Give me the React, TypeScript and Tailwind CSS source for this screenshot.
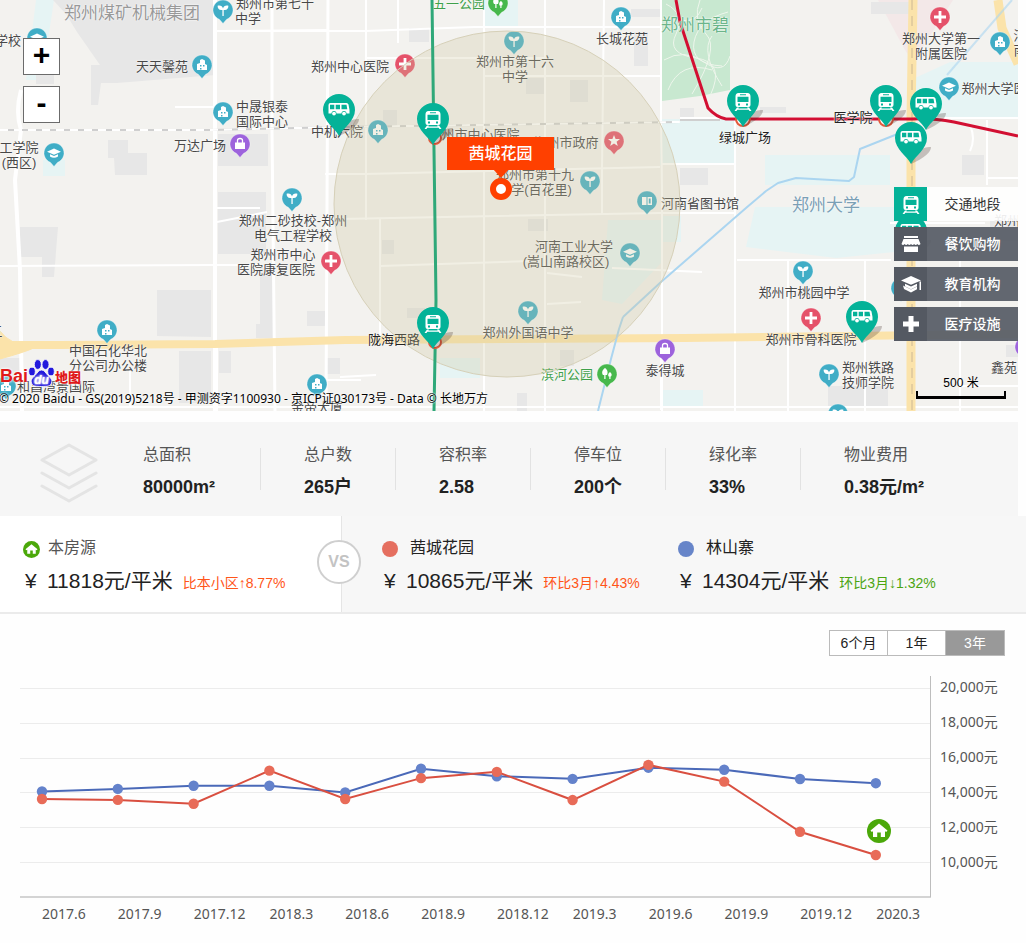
import React, { useState } from "react";

type Kind = "sprout" | "building" | "cap" | "book" | "cross" | "star" | "bag" | "tree";

const PIN_COLORS: Record<Kind, string> = {
  sprout: "#40adc6",
  building: "#40adc6",
  cap: "#40adc6",
  book: "#40adc6",
  cross: "#e5526a",
  star: "#e5526a",
  bag: "#9d63dc",
  tree: "#47b84c",
};

const PINS: [Kind, number, number][] = [
  ["sprout", 223, 10],
  ["sprout", 514, 41],
  ["sprout", 292, 198],
  ["sprout", 590, 181],
  ["sprout", 528, 311],
  ["sprout", 803, 271],
  ["sprout", 829, 374],
  ["sprout", 838, 414],
  ["building", 202, 65],
  ["building", 223, 112],
  ["building", 378, 130],
  ["building", 107, 330],
  ["building", 317, 384],
  ["building", 621, 17],
  ["building", 1000, 42],
  ["building", 6, 386],
  ["building", 901, 288],
  ["cap", 37, 38],
  ["cap", 54, 153],
  ["cap", 630, 253],
  ["cap", 949, 87],
  ["book", 647, 201],
  ["cross", 405, 64],
  ["cross", 331, 261],
  ["cross", 940, 17],
  ["cross", 811, 318],
  ["star", 614, 141],
  ["bag", 240, 144],
  ["bag", 665, 349],
  ["bag", 1025, 347],
  ["tree", 498, 3],
  ["tree", 607, 374],
];

type Label = { x: number; y: number; lines: string[]; tone?: "park" | "area" | "campus" | "greenArea" | "station" };

// x is the middle of the label, y the middle of its first line.
const LABELS: Label[] = [
  { x: 132, y: 14, lines: ["郑州煤矿机械集团"], tone: "area" },
  { x: 275, y: 4, lines: ["郑州市第七十"] },
  { x: 248, y: 19, lines: ["中学"] },
  { x: 8, y: 41, lines: ["学校"] },
  { x: 162, y: 67, lines: ["天天馨苑"] },
  { x: 350, y: 67, lines: ["郑州中心医院"] },
  { x: 262, y: 107, lines: ["中晟银泰", "国际中心"] },
  { x: 200, y: 146, lines: ["万达广场"] },
  { x: 337, y: 132, lines: ["中机六院"] },
  { x: 19, y: 148, lines: ["工学院", "(西区)"] },
  { x: 293, y: 221, lines: ["郑州二砂技校-郑州", "电气工程学校"] },
  { x: 283, y: 255, lines: ["郑州市中心"] },
  { x: 276, y: 270, lines: ["医院康复医院"] },
  { x: 108, y: 351, lines: ["中国石化华北", "分公司办公楼"] },
  { x: 56, y: 387, lines: ["和昌湾景国际"] },
  { x: 317, y: 408, lines: ["金帝大厦"] },
  { x: -4, y: 332, lines: ["五"] },
  { x: 700, y: 204, lines: ["河南省图书馆"] },
  { x: 515, y: 62, lines: ["郑州市第十六", "中学"] },
  { x: 622, y: 39, lines: ["长城花苑"] },
  { x: 459, y: 4, lines: ["五一公园"], tone: "park" },
  { x: 695, y: 26, lines: ["郑州市碧"], tone: "greenArea" },
  { x: 535, y: 175, lines: ["郑州市第十九", "中学(百花里)"] },
  { x: 566, y: 143, lines: ["郑州市政府"] },
  { x: 474, y: 135, lines: ["郑州市中心医院"] },
  { x: 574, y: 247, lines: ["河南工业大学"] },
  { x: 566, y: 262, lines: ["(嵩山南路校区)"] },
  { x: 528, y: 333, lines: ["郑州外国语中学"] },
  { x: 567, y: 375, lines: ["滨河公园"], tone: "park" },
  { x: 665, y: 371, lines: ["泰得城"] },
  { x: 394, y: 340, lines: ["陇海西路"], tone: "station" },
  { x: 745, y: 138, lines: ["绿城广场"], tone: "station" },
  { x: 853, y: 118, lines: ["医学院"], tone: "station" },
  { x: 941, y: 39, lines: ["郑州大学第一", "附属医院"] },
  { x: 1020, y: 36, lines: ["河", "南"] },
  { x: 994, y: 89, lines: ["郑州大学医"] },
  { x: 826, y: 206, lines: ["郑州大学"], tone: "campus" },
  { x: 1007, y: 221, lines: ["郑州"] },
  { x: 804, y: 293, lines: ["郑州市桃园中学"] },
  { x: 811, y: 340, lines: ["郑州市骨科医院"] },
  { x: 868, y: 368, lines: ["郑州铁路", "技师学院"] },
  { x: 1004, y: 368, lines: ["鑫苑"] },
];

const TONES = {
  plain: "text-[13px] text-[#484848]",
  park: "text-[13px] text-[#3fa04a]",
  area: "text-[17px] text-[#999999]",
  greenArea: "text-[17px] text-[#6bb58a]",
  campus: "text-[17px] text-[#7b9fb5]",
  station: "text-[13px] text-[#222222]",
};

const TRANSIT: ["train" | "bus", number, number][] = [
  ["bus", 339, 110],
  ["train", 433, 119],
  ["train", 433, 323],
  ["train", 743, 101],
  ["train", 886, 101],
  ["bus", 926, 104],
  ["bus", 911, 231],
  ["bus", 911, 138],
  ["bus", 862, 317],
];

function PinGlyph({ kind }: { kind: Kind }) {
  switch (kind) {
    case "sprout":
      return <path d="M-.6 6V0C-4 .6-5.4-1.6-5.4-4.2-2.600-5-.5-3.700 0-1.400.5-3.700 2.600-5 5.400-4.200 5.400-1.600 4 .6.7 0v6z" fill="#fff" />;
    case "building":
      return <path d="M-5 5v-6l3-1v-3l2-1 3 1.500V-1l2 1v5zM-2 0v1.500h1.500V0zm3 0v1.500h1.500V0zM-2 3v1.500h1.500V3z" fill="#fff" fillRule="evenodd" />;
    case "cap":
      return <path d="M0-4.500 7-1.300 0 1.800-7-1.300zM-4 1.200 0 3 4 1.200v2.300Q0 6.200-4 3.500z" fill="#fff" />;
    case "book":
      return <path d="M-5-4h4.500v8H-5zM.5-4H5v8H.5zM1.800-2.500v5h1.800v-5z" fill="#fff" fillRule="evenodd" />;
    case "cross":
      return <path d="M-1.400-6h2.800v4.600H6v2.800H1.400V6h-2.800V1.400H-6v-2.800h4.600z" fill="#fff" />;
    case "star":
      return <path d="M0-6 1.600-2 6-1.900 2.600.8 3.800 5 0 2.600-3.800 5-2.600.8-6-1.900-1.600-2z" fill="#fff" />;
    case "bag":
      return (
        <g>
          <path d="M-5-1.500H5V5H-5z" fill="#fff" />
          <path d="M-2.500-1v-2.500a2.500 2 0 0 1 5 0V-1" fill="none" stroke="#fff" strokeWidth="1.300" />
        </g>
      );
    case "tree":
      return <path d="M-2-6C1-4 1-1 0 1h-1.500v4h-1.200V1H-4C-5.500-1-5-4-2-6zM3-2c2 1.500 2 3 1 4.500H3.500V5H2.300V2.500H1.500C.8 1 1.300-1 3-2z" fill="#fff" />;
  }
}

function TrainGlyph() {
  return (
    <path
      fill="#fff"
      fillRule="evenodd"
      d="M-4.500-8h9Q7.500-8 7.500-4.500V4Q7.500 6 5.500 6h-11Q-7.500 6-7.500 4v-8.500Q-7.500-8-4.500-8zM-3-6.700v1h6v-1zM-5.500-4.300V1h11v-5.300zM-5 2.600v1.800h2V2.600zm8 0v1.800h2V2.600zM-6 6.600h2L-4.600 7.500h9.200L4 6.600h2L8.500 10h-2l-.9-1.200h-11.200L-6.500 10h-2z"
    />
  );
}

function BusGlyph() {
  return (
    <g>
      <path
        fill="#fff"
        fillRule="evenodd"
        d="M-8.500-6h16Q9-6 9.500-4.500L10.500 1v3.500h-3a2.500 2.500 0 0 0-5 0h-5a2.500 2.500 0 0 0-5 0h-3v-8.500Q-10.500-6-8.500-6zM-9-4.300V.2h4.300v-4.500zm5.700 0V.2H1v-4.500zm5.800 0V.2h5.800L7.500-4.300z"
      />
      <circle cx="-5" cy="4.600" r="1.900" fill="#fff" />
      <circle cx="5" cy="4.600" r="1.900" fill="#fff" />
    </g>
  );
}

function MapBase() {
  return (
    <svg className="absolute left-0 top-0" width="1018" height="411" viewBox="0 0 1018 411" aria-hidden="true">
      <rect width="1018" height="411" fill="#f3f2ef" />
      <g fill="#e6f4f4">
        <path d="M36 0h18l-12 80H26zM43 160h22v16H43zM484 0h34v27h-34zM680 119h55v46h-75v-46zM661 216h20v26h-20zM765 155h125v30H765zM755 207h163l-14 44-68 7-90-11zM950 62h68v57H915V78zM661 390h42v18h-42z" />
        <path d="M608 220h54v42l-40 42-20-4zM440 358h40v20h-40z" />
      </g>
      <path d="M662 0h68v90l-30 6-38 5z" fill="#c8e8d0" />
      <g stroke="#eef6ec" fill="none" strokeWidth="1">
        <path d="M666 4q20 10 10 30t20 24 14 38M728 12q-30 8-34 30t28 24M664 60q20-12 40 2t26-6M700 0q-8 20 6 34t-14 60M668 90q12-30 44-20M680 20q16 4 22-12M712 36q-12 16 10 50" />
      </g>
      <path d="M878 0h75l-40 62-8-12z" fill="#f3e8e8" />
      <g fill="#e7e7e7">
        <path d="M53 0h86l76 0v75l-98 8-16 0-3 22H91V65h9L77 32 66 14zM36 64h18v20H36zM108 140h20v13h19v22h-32l-1-17h-6zM218 134h50v32h-50zM218 192h48v62h-48zM20 227h38l-4 50H42v-20H20zM157 290h54v47l-54-1zM179 351h32v52h-32zM260 268h14v70h-18v-14h4zM307 311h18v15h-18zM219 351h12v22h-12zM0 358h20v22H0zM409 28h20v14h-20zM634 32h14v34h-14zM631 9h30v8h-30zM327 358h13v16h-13z" />
        <path d="M871 2h38v12h-38zM680 108h14v12h-14zM680 168h28v17h-28zM760 107h26v6h-26zM962 155h22v20h-22zM990 215h28v26h-28zM828 386h60v20h-60zM1006 345h12v12h-12zM517 393h10v18h-10zM526 78h20v16h-20zM570 80h18v22h-18zM383 110h14v15h-14zM382 240h12v14h-12zM407 308h18v10h-18zM528 219h20v12h-20zM560 350h14v16h-14z" />
      </g>
      <g stroke="#ffffff" fill="none" strokeWidth="4">
        <path d="M215 0v411M21 90q-6 22 0 40l-6 50 5 90 2 141" strokeWidth="4" />
        <path d="M272 0v130l3 281M328 0l-2 411" strokeWidth="3" />
      </g>
      <g stroke="#ffffff" fill="none" strokeWidth="2">
        <path d="M366 0v220M380 218v125M398 0v43M484 0v411M545 0v411M604 0l-2 170v45M661 0v119l1 70v222M735 119v292M788 260v151M865 260v151M960 260v151M987 120v65M130 370v38M970 125q6 14 0 26" />
        <path d="M215 31h150l110-4 186 0M215 31l114-1M366 58h180M484 76h176M0 266l215-1h45M175 107h40M217 222l50-10M325 174h40l295-7M340 219l320-6h75M380 266l150-5M612 268l90 4M547 273l35 4M547 304l34-2M340 377l36-2M484 338h-60M735 164h-74M737 260h154M987 178h31M217 347v64M680 118h338M327 380h34M215 208h45M960 386h58M890 223h95M661 340v70" />
        <path d="M0 407h1018" />
      </g>
      <path d="M0 130h210l130-3 340-5M680 120h40" stroke="#cfcfcf" strokeWidth="2" fill="none" />
      <path d="M0 130h210l130-3 340-5" stroke="#ffffff" strokeDasharray="8 6" strokeWidth="2" fill="none" />
      <g stroke="#fbe3aa" fill="none">
        <path d="M0 345h60l155-1 130-4 340-2 333-4" strokeWidth="8" />
        <path d="M0 331q10 14 30 14t-30 14z" fill="#fbe3aa" strokeWidth="1" />
        <path d="M913 0l-2 119v292" strokeWidth="9" />
        <path d="M998 0l4 28 16 36" strokeWidth="9" />
      </g>
      <path d="M912 0v411" stroke="#cdb894" strokeWidth="1" strokeDasharray="10 6" fill="none" />
      <g stroke="#abd5f0" fill="none" strokeWidth="2" strokeLinejoin="round">
        <path d="M598 411l13-52 8-30 4-12M623 317l38-35 85-74 20-17 12-8 18-5 53 3 5-4 6-28 50-20" />
        <path d="M1012 0l-65 75" opacity=".6" />
      </g>
      <path d="M676 0l4 22 28 86q8 9 18 11h186q20-1 42 3l64 14" stroke="#d20f32" strokeWidth="3" fill="none" />
    </svg>
  );
}

function MapOverlay() {
  return (
    <svg className="absolute left-0 top-0" width="1018" height="411" viewBox="0 0 1018 411" aria-hidden="true">
      <circle cx="507" cy="204" r="173" fill="#ccc49d" fillOpacity=".28" stroke="#d6d0b8" strokeWidth="1" />
      <path d="M432 0l4 300-2 111" stroke="#2fa879" strokeWidth="3" fill="none" />
      <g fill="#fff" stroke="#e35a3c" strokeWidth="2">
        <circle cx="743" cy="119" r="7" />
        <circle cx="886" cy="119" r="7" />
        <circle cx="435" cy="138" r="6" />
        <circle cx="435" cy="342" r="6" />
      </g>
      {TRANSIT.map(([kind, x, y]) => (
        <g key={`${x}-${y}`} transform={`translate(${x} ${y})`}>
          <path d="M0 26Q20 17 20 9 12 8 4 16z" fill="#3c2c24" opacity=".26" />
          <path d="M0 26C-4 18-16 11-16 0a16 16 0 0 1 32 0C16 11 4 18 0 26z" fill="#04b298" />
          {kind === "train" ? (
            <TrainGlyph />
          ) : (
            <g transform="translate(0 -1)">
              <BusGlyph />
            </g>
          )}
        </g>
      ))}
      <path d="M493 169h16l-8 9z" fill="#ff4000" />
      <circle cx="501" cy="189" r="8" fill="#fff" stroke="#ff4000" strokeWidth="6" />
    </svg>
  );
}

function BaiduLogo() {
  return (
    <div className="absolute left-0 top-[355px] flex h-8 items-end font-['Liberation_Sans',sans-serif] font-bold text-[#e01a1a] [text-shadow:0_0_2px_#fff,0_0_3px_#fff]">
      <span className="text-[18px] leading-[22px]">Bai</span>
      <svg width="27" height="28" viewBox="0 0 27 28" role="img" aria-label="Baidu">
        <g fill="#2319dc" stroke="#fff" strokeWidth=".8">
          <path d="M13.500 11c3 0 4 3 6.500 5.500s4.500 4 3.500 7.500-5 3.500-10 3.500-9 0-10-3.500 1-5 3.500-7.500 3.500-5.500 6.500-5.500z" />
          <ellipse cx="4" cy="12.500" rx="3.300" ry="4.300" />
          <ellipse cx="9.800" cy="5.500" rx="3.500" ry="4.900" />
          <ellipse cx="17.500" cy="5.500" rx="3.500" ry="4.900" />
          <ellipse cx="23" cy="12.500" rx="3.300" ry="4.300" />
        </g>
        <text x="13.500" y="25" textAnchor="middle" fontSize="12" fill="#fff" fontWeight="bold" fontStyle="italic">
          du
        </text>
      </svg>
      <span className="font-['Noto_Sans_CJK_SC',sans-serif] text-[13px] font-black leading-[20px]">地图</span>
    </div>
  );
}

const CATEGORIES = [
  { name: "交通地段", icon: <TrainGlyph /> },
  {
    name: "餐饮购物",
    icon: <path fill="#fff" d="M-7-8H7v2H-7zM-7.500-5h15L9.500 0q-1.600 2-3.200 0-1.600 2-3.200 0Q1.600 2 0 0q-1.600 2-3.200 0-1.600 2-3.200 0-1.600 2-3.100 0zM-7 2.500H7V8H-7z" />,
  },
  {
    name: "教育机构",
    icon: <path fill="#fff" d="M0-8 10-3.500 0 .8-10-3.500zM-6-.2 0 2.600 6-.2v2.400L0 5.200-6 2.200zM-8 1.500l8 4 6-3v2.800L0 8.500l-7-3.600zM8.500-2.500h1.500V6H8.500z" />,
  },
  { name: "医疗设施", icon: <path fill="#fff" d="M-2.500-8h5v5.500H8v5H2.500V8h-5V2.500H-8v-5h5.500z" /> },
];

function MapSection() {
  const [category, setCategory] = useState("交通地段");
  return (
    <section aria-label="地图" className="relative mr-2 h-[411px] overflow-hidden bg-[#f3f2ef]">
      <MapBase />
      <svg className="absolute left-0 top-0" width="1018" height="411" viewBox="0 0 1018 411" aria-hidden="true">
        {PINS.map(([kind, x, y]) => (
          <g key={`${x}-${y}`} transform={`translate(${x} ${y})`}>
            <path d="M0 13.500-3.500 9.400A10 10 0 1 1 3.500 9.400z" fill={PIN_COLORS[kind]} stroke="#fff" strokeOpacity=".6" strokeWidth=".6" />
            <PinGlyph kind={kind} />
          </g>
        ))}
      </svg>
      {LABELS.map((l) => (
        <div
          key={`${l.x}-${l.y}`}
          className={`absolute -mt-2 -translate-x-1/2 whitespace-nowrap text-center leading-[15px] [text-shadow:0_0_2px_#fff,0_0_1px_#fff] ${TONES[l.tone ?? "plain"]}`}
          style={{ left: l.x, top: l.y }}
        >
          {l.lines.map((line) => (
            <div key={line}>{line}</div>
          ))}
        </div>
      ))}
      <MapOverlay />
      <div className="absolute left-[447px] top-[137px] flex h-[33px] w-[107px] items-center justify-center bg-[#ff4000] text-base font-medium text-white">
        茜城花园
      </div>

      <div className="absolute left-[23px] top-[38px] flex flex-col gap-[11px]">
        {["+", "-"].map((sign) => (
          <button
            key={sign}
            type="button"
            aria-label={sign === "+" ? "放大" : "缩小"}
            className="flex size-[37px] items-center justify-center border border-[#6b6b6b] bg-white pb-1 text-[30px] font-bold leading-none text-black"
          >
            {sign}
          </button>
        ))}
      </div>

      <div className="absolute right-0 top-[187px] flex flex-col gap-[6px]">
        {CATEGORIES.map((c) => {
          const active = c.name === category;
          return (
            <button
              key={c.name}
              type="button"
              aria-pressed={active}
              onClick={() => setCategory(c.name)}
              className="flex h-[34px] w-[124px] items-stretch text-sm"
            >
              <span className={`flex w-[33px] items-center justify-center ${active ? "bg-[#04b298]" : "bg-[#545962]"}`}>
                <svg width="22" height="22" viewBox="-11 -11 22 22" aria-hidden="true">
                  {c.icon}
                </svg>
              </span>
              <span
                className={`flex flex-1 items-center justify-center ${active ? "bg-white/90 text-[#333333]" : "bg-[#5a5f68]/95 font-medium text-white"}`}
              >
                {c.name}
              </span>
            </button>
          );
        })}
      </div>

      <BaiduLogo />
      <p className="absolute -left-px top-[391px] whitespace-nowrap font-['Noto_Sans','Noto_Sans_CJK_SC',sans-serif] text-xs leading-4 text-black [text-shadow:0_0_2px_#fff,0_0_2px_#fff]">
        © 2020 Baidu - GS(2019)5218号 - 甲测资字1100930 - 京ICP证030173号 - Data © 长地万方
      </p>
      <div className="absolute right-[12px] top-[375px] w-[90px] text-center text-xs leading-4 text-black">
        500 米
        <div className="h-2 border-x-2 border-b-[3px] border-black" />
      </div>
    </section>
  );
}

const STATS = [
  ["总面积", "80000m²"],
  ["总户数", "265户"],
  ["容积率", "2.58"],
  ["停车位", "200个"],
  ["绿化率", "33%"],
  ["物业费用", "0.38元/m²"],
];

function Stats() {
  return (
    <section aria-label="小区概况" className="mr-2 mt-[11px] flex h-[94px] items-center bg-[#f6f6f6]">
      <svg className="ml-10 mr-[45px] mt-2 shrink-0" width="58" height="60" viewBox="0 0 58 60" fill="none" stroke="#e4e4e4" strokeWidth="3" strokeLinejoin="round" strokeLinecap="round" aria-hidden="true">
        <path d="M29 2 56 17 29 32 2 17zM2 30 29 45 56 30M2 43 29 58 56 43" />
      </svg>
      <dl className="grid flex-1 grid-cols-[117fr_135fr_135fr_135fr_135fr_218fr]">
        {STATS.map(([name, value], i) => (
          <div key={name} className="flex items-center">
            {i > 0 && <span className="mr-[43px] h-[42px] w-px bg-[#e2e2e2]" />}
            <div className="pt-1">
              <dt className="text-base leading-6 text-[#555555]">{name}</dt>
              <dd className="mt-2 whitespace-nowrap text-lg font-bold leading-6 text-[#222222]">{value}</dd>
            </div>
          </div>
        ))}
      </dl>
    </section>
  );
}

function HouseGlyph() {
  return (
    <g>
      <circle r="12" fill="#4ba80a" />
      <path d="M0-7.500 8.500-.5 7.200 1 6 .2V6H1.800V1.500h-3.600V6H-6V.2L-7.200 1-8.500-.5z" fill="#fff" />
    </g>
  );
}

function Price({ marker, name, price, change, tone }: { marker: React.ReactNode; name: string; price: string; change: string; tone: string }) {
  return (
    <div>
      <h2 className="flex items-center text-base leading-6">
        {marker}
        {name}
      </h2>
      <p className="mt-[9px] flex items-baseline whitespace-nowrap text-[21px] leading-6 text-[#222222]">
        <span className="ml-1 mr-[11px] w-[11px]">¥</span>
        <span>{price}元/平米</span>
        <span className={`ml-[10px] text-sm ${tone}`}>{change}</span>
      </p>
    </div>
  );
}

function Comparison() {
  return (
    <section aria-label="价格对比" className="relative flex h-[98px] border-b-2 border-[#ebebeb] bg-[#f7f7f7]">
      <div className="w-1/3 border-r border-[#e5e5e5] bg-white pl-[21px] pt-5 text-[#555555]">
        <Price
          marker={
            <svg className="ml-0.5 mr-2 mt-0.5" width="17" height="17" viewBox="-12 -12 24 24" aria-hidden="true">
              <HouseGlyph />
            </svg>
          }
          name="本房源"
          price="11818"
          change="比本小区↑8.77%"
          tone="text-[#ff5519]"
        />
      </div>
      <div className="flex flex-1 pl-[38px] pt-5 text-[#222222]">
        <div className="w-[296px]">
          <Price
            marker={<span className="ml-0.5 mr-3 mt-0.5 size-4 rounded-full bg-[#e56f60]" />}
            name="茜城花园"
            price="10865"
            change="环比3月↑4.43%"
            tone="text-[#ff5519]"
          />
        </div>
        <Price
          marker={<span className="ml-0.5 mr-3 mt-0.5 size-4 rounded-full bg-[#6785c9]" />}
          name="林山寨"
          price="14304"
          change="环比3月↓1.32%"
          tone="text-[#4ba512]"
        />
      </div>
      <span className="absolute left-1/3 top-6 -ml-[25px] flex size-11 items-center justify-center rounded-full border-2 border-[#cfcfcf] bg-white text-base font-bold text-[#c3c3c3]">
        VS
      </span>
    </section>
  );
}

const MONTHS = ["2017.6", "2017.9", "2017.12", "2018.3", "2018.6", "2018.9", "2018.12", "2019.3", "2019.6", "2019.9", "2019.12", "2020.3"];
const AREA = [14050, 14200, 14380, 14380, 14000, 15360, 14930, 14780, 15420, 15300, 14770, 14530];
const ESTATE = [13620, 13570, 13350, 15250, 13620, 14820, 15180, 13560, 15580, 14620, 11740, 10400];
const TICKS = [20000, 18000, 16000, 14000, 12000, 10000];

const px = (i: number) => 22 + i * 75.8;
const py = (v: number) => 12 + ((20000 - v) / 2000) * 34.8;

function Series({ values, line, dot }: { values: number[]; line: string; dot: string }) {
  return (
    <g>
      <polyline points={values.map((v, i) => `${px(i)},${py(v)}`).join(" ")} fill="none" stroke={line} strokeWidth="2" />
      {values.map((v, i) => (
        <circle key={i} cx={px(i)} cy={py(v)} r="5.200" fill={dot} />
      ))}
    </g>
  );
}

function Trend() {
  const [range, setRange] = useState("3年");
  return (
    <section aria-label="价格走势" className="pb-4 pt-4 text-[#555555]">
      <div className="mr-[21px] flex justify-end">
        <div className="flex divide-x divide-[#bbbbbb] border border-[#bbbbbb]">
          {["6个月", "1年", "3年"].map((r) => (
            <button
              key={r}
              type="button"
              aria-pressed={r === range}
              onClick={() => setRange(r)}
              className={`h-6 w-[58px] text-sm leading-6 ${r === range ? "bg-[#999999] text-white" : "bg-white text-[#222222]"}`}
            >
              {r}
            </button>
          ))}
        </div>
      </div>
      <div className="mt-5 flex pl-5">
        <svg className="h-auto min-w-0 flex-1" viewBox="0 0 912 222" role="img" aria-label="价格走势图">
          {TICKS.map((t) => (
            <path key={t} d={`M0 ${Math.round(py(t))}.5H910`} stroke="#ececec" />
          ))}
          <path d="M0 221H911" stroke="#d4d4d4" strokeWidth="2" />
          <path d="M910.500 0V221" stroke="#bdbdbd" />
          <Series values={AREA} line="#4a69b8" dot="#6482cb" />
          <Series values={ESTATE} line="#d94f40" dot="#e86b58" />
          <g transform="translate(859 155)">
            <HouseGlyph />
          </g>
        </svg>
        <ul className="-mt-[6px] grid h-[209px] w-[94px] grid-rows-6 items-center pl-2 font-['Noto_Sans','Noto_Sans_CJK_SC',sans-serif] text-sm">
          {TICKS.map((t) => (
            <li key={t}>{t.toLocaleString("en-US")}元</li>
          ))}
        </ul>
      </div>
      <ol className="ml-[42px] mr-[74px] mt-1 grid grid-cols-12 font-['Noto_Sans','Noto_Sans_CJK_SC',sans-serif] text-sm leading-6">
        {MONTHS.map((m) => (
          <li key={m}>{m}</li>
        ))}
      </ol>
    </section>
  );
}

export default function App() {
  return (
    <main className="min-h-screen bg-[#fefefe] font-['Liberation_Sans','Noto_Sans_CJK_SC',sans-serif]">
      <MapSection />
      <Stats />
      <Comparison />
      <Trend />
    </main>
  );
}
